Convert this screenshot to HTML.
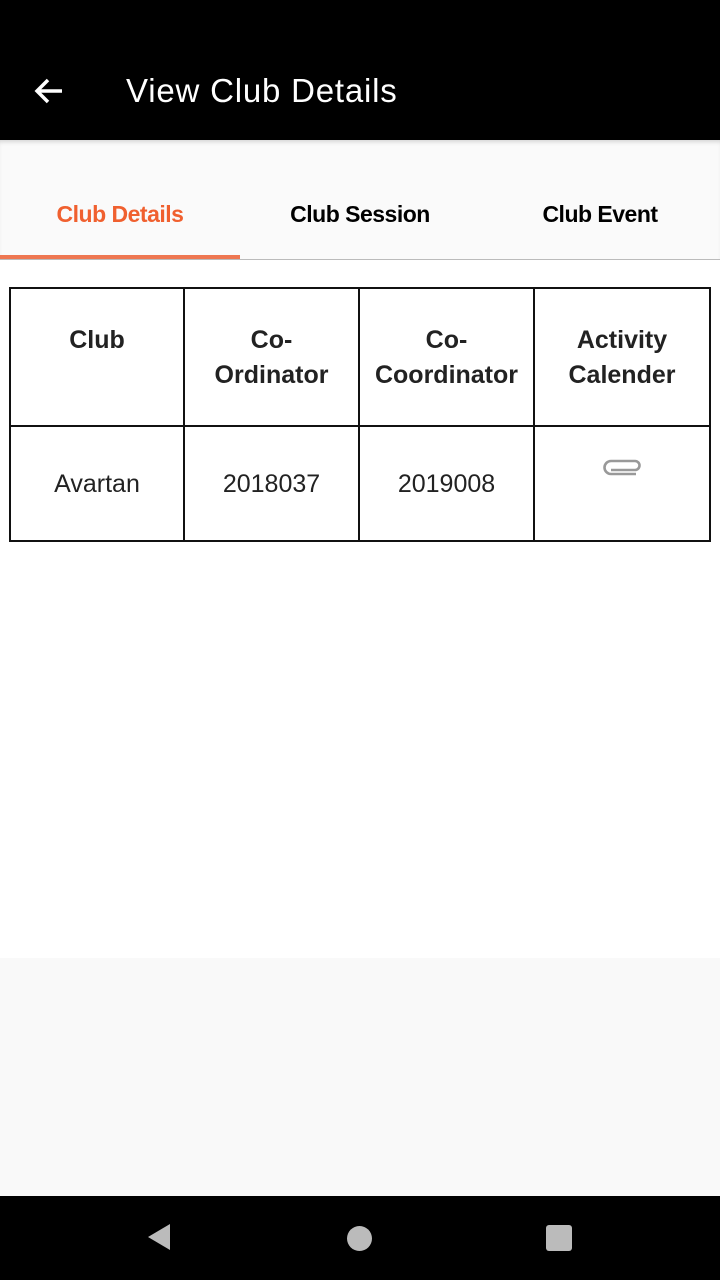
<!DOCTYPE html>
<html><head><style>
body{margin:0;width:720px;height:1280px;position:relative;font-family:"Liberation Sans",sans-serif;background:#fff;overflow:hidden}
.top{position:absolute;left:0;top:0;width:720px;height:140px;background:#000}
.title{position:absolute;left:126px;top:70px;color:#fff;font-size:33px;line-height:42px;letter-spacing:0.8px}
.tabs{position:absolute;top:140px;left:0;width:720px;height:119px;background:#fafafa;border-bottom:1px solid #bbb;box-shadow:inset 0 4px 4px -2px rgba(0,0,0,.15)}
.tab{position:absolute;top:61px;width:240px;text-align:center;font-size:23px;font-weight:bold;letter-spacing:-0.5px}
.ul{position:absolute;left:0;top:255px;width:240px;height:4px;background:#ee7752}
table{position:absolute;left:9px;top:287px;border-collapse:collapse;width:702px}
td{border:2px solid #111;text-align:center;font-size:25px;color:#222;padding:0}
.h td{height:138px;font-weight:bold;line-height:35px;vertical-align:top;padding-top:34px;box-sizing:border-box}
.r td{height:111px;padding-top:2px}
.bottom{position:absolute;left:0;top:958px;width:720px;height:238px;background:#f9f9f9}
.nav{position:absolute;left:0;top:1196px;width:720px;height:84px;background:#000}
</style></head><body>
<div class="top">
<svg style="position:absolute;left:34px;top:77px" width="30" height="28" viewBox="0 0 30 28"><path d="M28 14H4M14 3L3 14l11 11" stroke="#fff" stroke-width="3.5" fill="none"/></svg>
<div class="title">View Club Details</div></div>
<div class="tabs">
<div class="tab" style="left:0;color:#f0602f">Club Details</div>
<div class="tab" style="left:240px">Club Session</div>
<div class="tab" style="left:480px">Club Event</div>
</div>
<div class="ul"></div>
<table>
<tr class="h"><td style="width:174px">Club</td><td style="width:175px">Co-<br>Ordinator</td><td style="width:175px">Co-<br>Coordinator</td><td>Activity<br>Calender</td></tr>
<tr class="r"><td>Avartan</td><td>2018037</td><td>2019008</td><td style="vertical-align:top">
<svg style="margin-top:28px" width="40" height="20" viewBox="0 0 40 20"><path d="M8 13h24a4.5 4.5 0 0 0 0-9H8a6.5 6.5 0 0 0 0 13h25" stroke="#999" stroke-width="2.6" fill="none" transform="translate(1,0)"/></svg></td></tr>
</table>
<div class="bottom"></div>
<div class="nav">
<svg style="position:absolute;left:146px;top:26px" width="26" height="30"><path d="M24 2L2 15l22 13z" fill="#bbb"/></svg>
<div style="position:absolute;left:347px;top:30px;width:25px;height:25px;border-radius:50%;background:#bbb"></div>
<div style="position:absolute;left:546px;top:29px;width:26px;height:26px;border-radius:3px;background:#bbb"></div>
</div>
</body></html>
